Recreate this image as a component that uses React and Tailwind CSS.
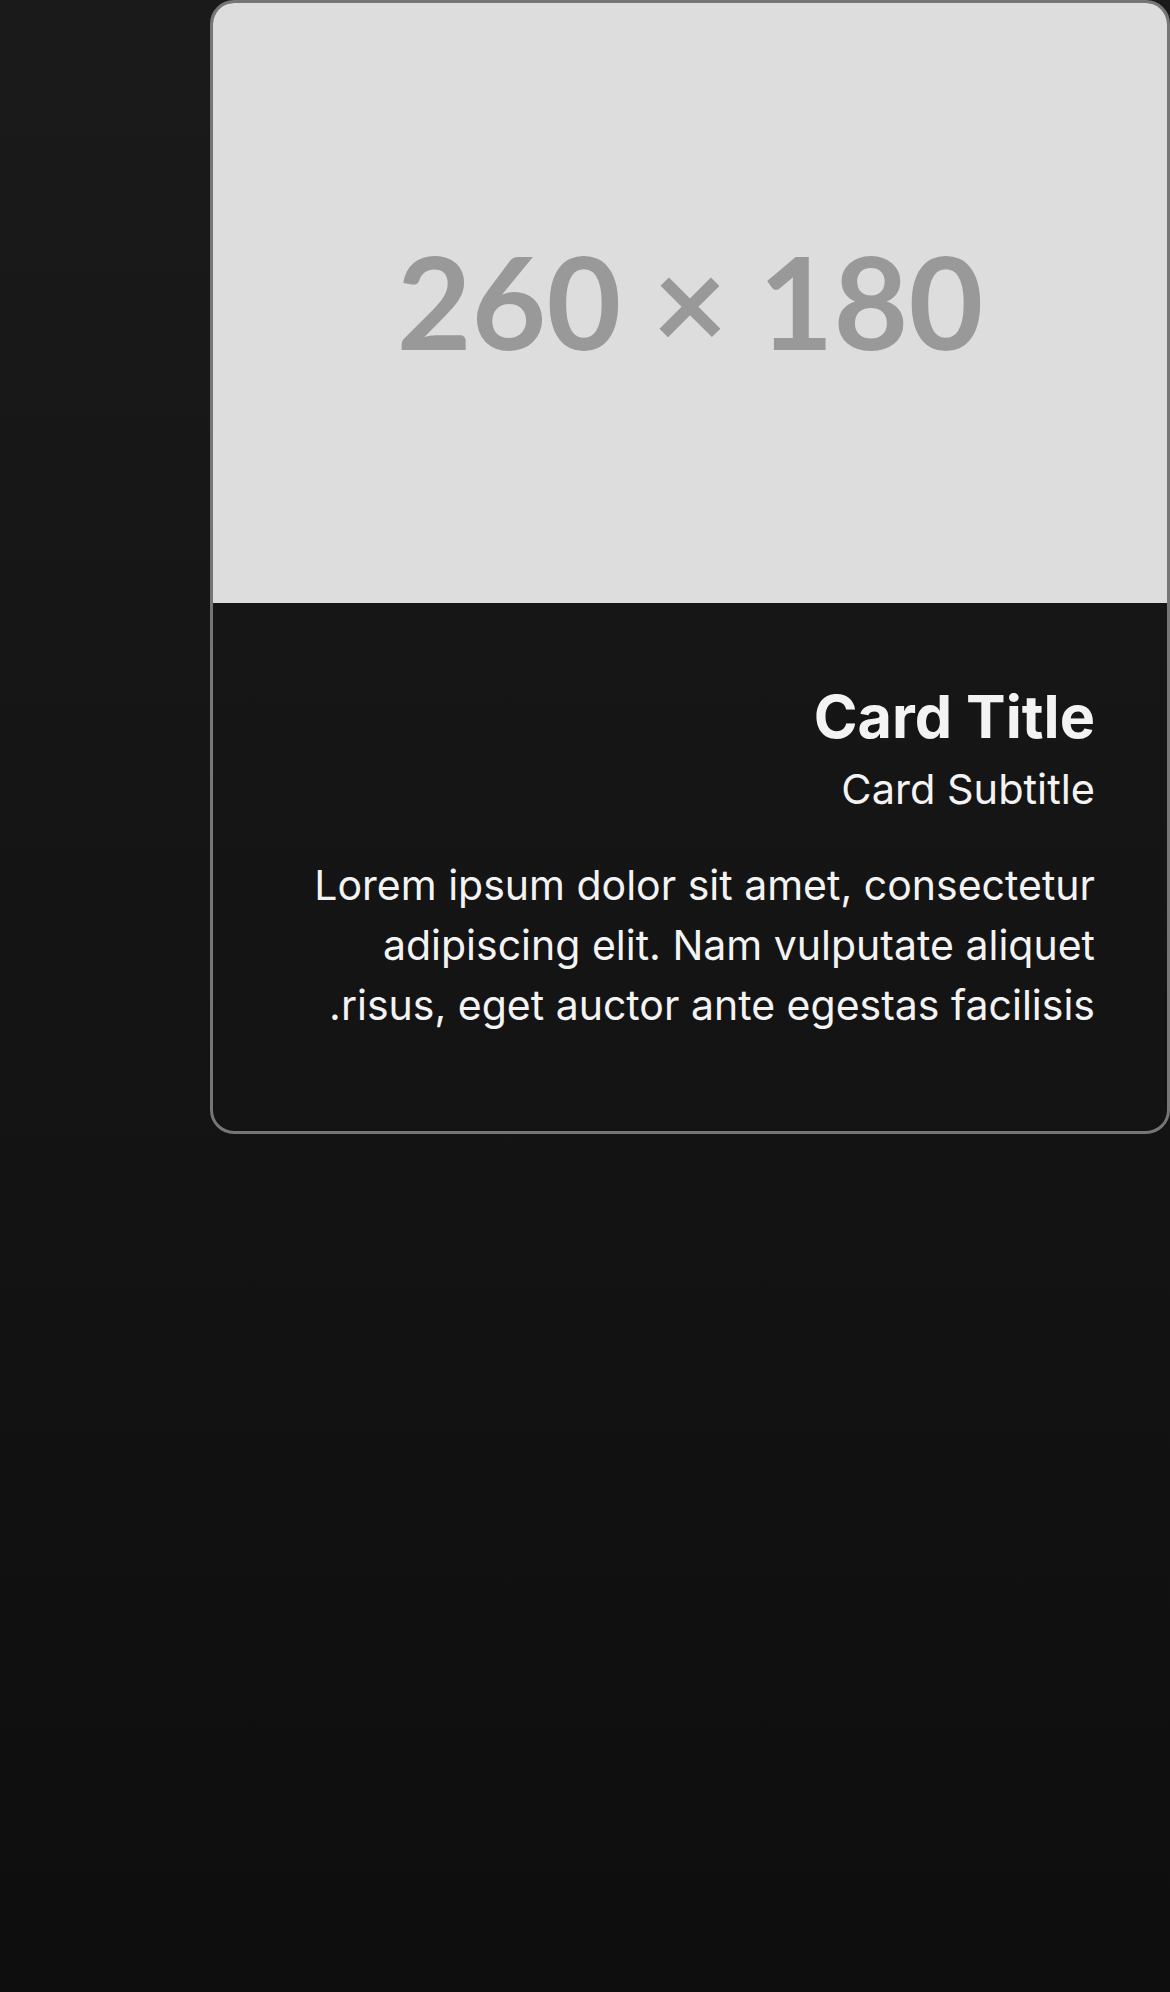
export default function App() {
  return (
    <div
      dir="rtl"
      className="min-h-[1992px] w-full bg-gradient-to-b from-[#1a1a1a] to-[#0e0e0e]"
      style={{ fontFamily: "Inter, 'Noto Sans', sans-serif" }}
    >
      <div className="w-[960px] overflow-hidden rounded-[24px] border-[3px] border-[#767676]">
        <div className="flex h-[600px] items-center justify-center bg-[#dddddd] pb-[5px]">
          <span
            dir="ltr"
            className="text-[129px] font-bold leading-none text-[#999999]"
            style={{ fontFamily: "Lato, 'Liberation Sans', sans-serif" }}
          >
            260 × 180
          </span>
        </div>
        <div className="px-[72px] pt-[72px] pb-[96px] text-[#f3f3f3]">
          <h2 className="text-[59.3px] font-bold leading-[84px]">Card Title</h2>
          <p className="text-[41.5px] leading-[60px]">Card Subtitle</p>
          <p className="mt-[36px] text-[41px] leading-[60px]">
            Lorem ipsum dolor sit amet, consectetur adipiscing elit. Nam vulputate aliquet risus, eget auctor ante egestas facilisis.
          </p>
        </div>
      </div>
    </div>
  );
}
